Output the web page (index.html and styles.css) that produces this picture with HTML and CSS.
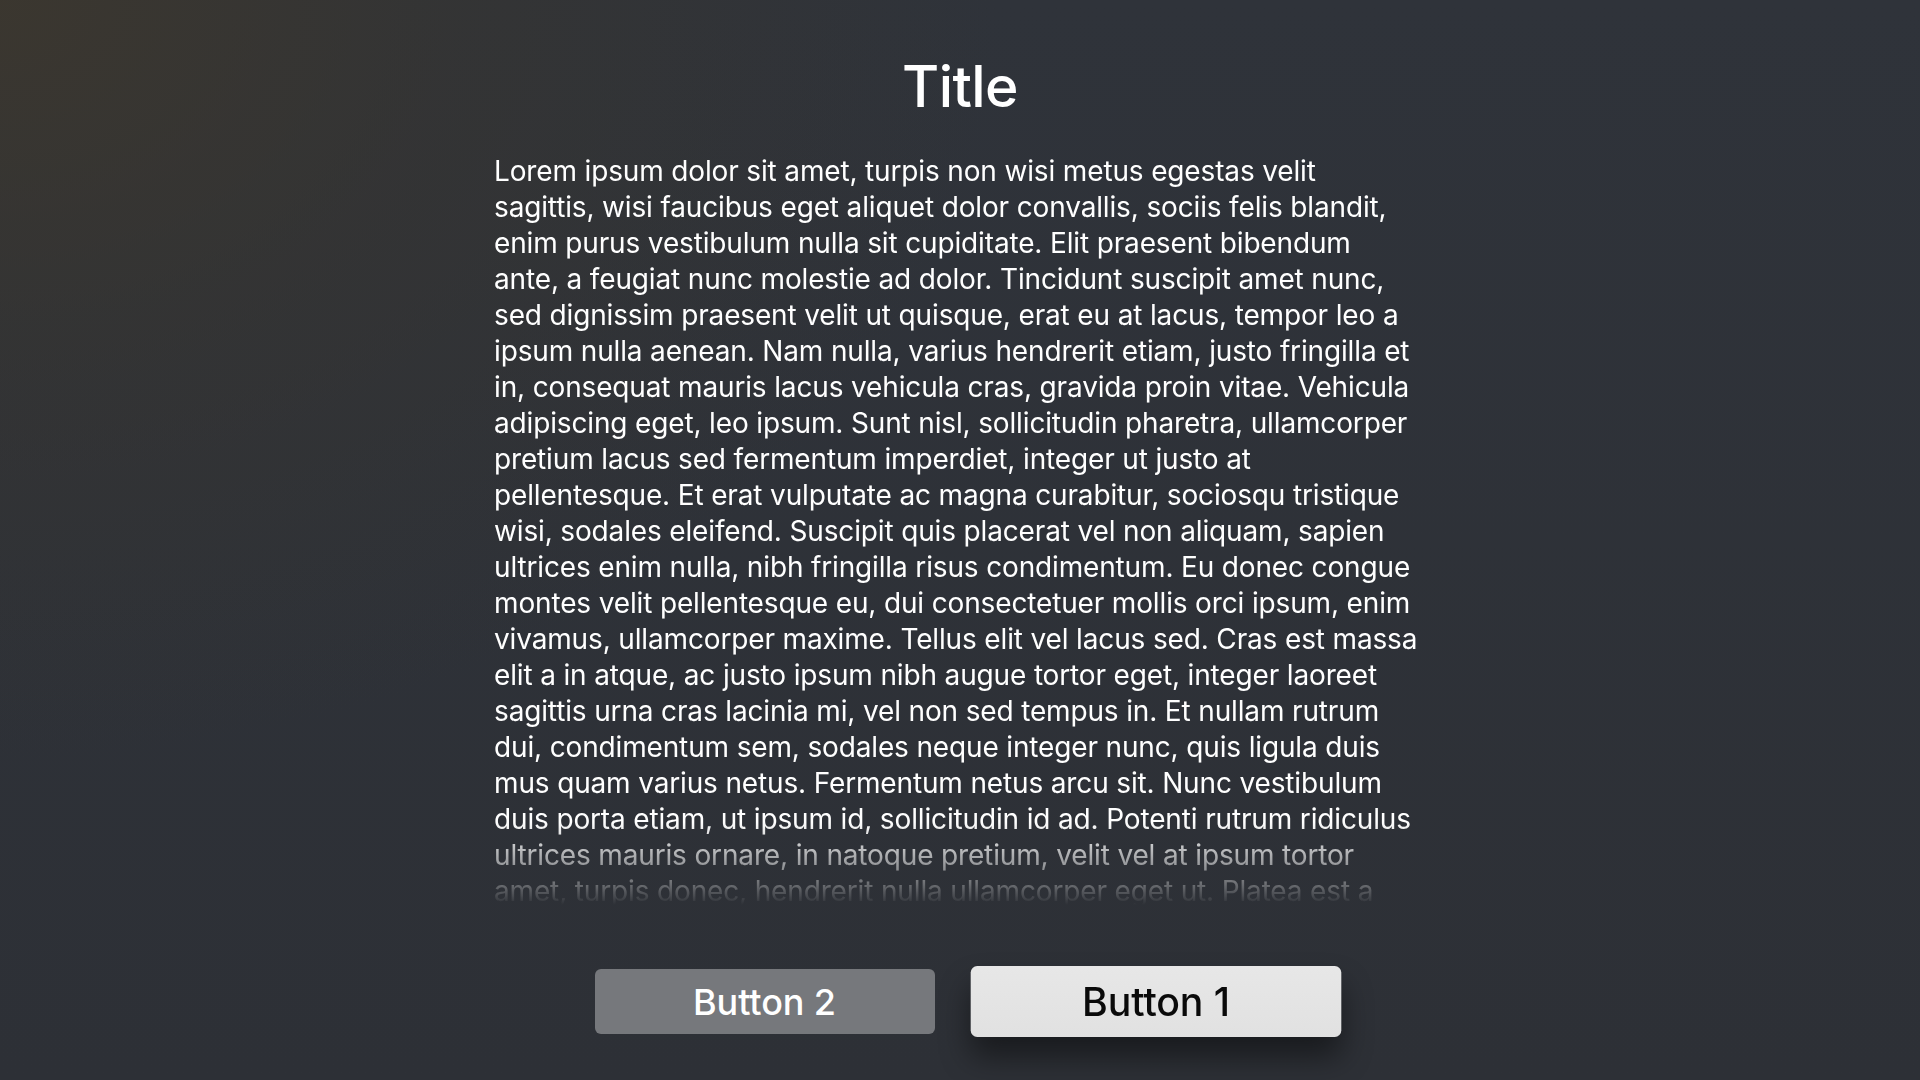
FILE: index.html
```html
<!DOCTYPE html>
<html lang="en">
<head>
<meta charset="utf-8">
<title>Alert</title>
<link rel="stylesheet" href="styles.css">
</head>
<body>
<main class="screen">
  <h1 class="title">Title</h1>
  <div class="message">
    <p class="message-text">Lorem ipsum dolor sit amet, turpis non wisi metus egestas velit<br>
sagittis, wisi faucibus eget aliquet dolor convallis, sociis felis blandit,<br>
enim purus vestibulum nulla sit cupiditate. Elit praesent bibendum<br>
ante, a feugiat nunc molestie ad dolor. Tincidunt suscipit amet nunc,<br>
sed dignissim praesent velit ut quisque, erat eu at lacus, tempor leo a<br>
ipsum nulla aenean. Nam nulla, varius hendrerit etiam, justo fringilla et<br>
in, consequat mauris lacus vehicula cras, gravida proin vitae. Vehicula<br>
adipiscing eget, leo ipsum. Sunt nisl, sollicitudin pharetra, ullamcorper<br>
pretium lacus sed fermentum imperdiet, integer ut justo at<br>
pellentesque. Et erat vulputate ac magna curabitur, sociosqu tristique<br>
wisi, sodales eleifend. Suscipit quis placerat vel non aliquam, sapien<br>
ultrices enim nulla, nibh fringilla risus condimentum. Eu donec congue<br>
montes velit pellentesque eu, dui consectetuer mollis orci ipsum, enim<br>
vivamus, ullamcorper maxime. Tellus elit vel lacus sed. Cras est massa<br>
elit a in atque, ac justo ipsum nibh augue tortor eget, integer laoreet<br>
sagittis urna cras lacinia mi, vel non sed tempus in. Et nullam rutrum<br>
dui, condimentum sem, sodales neque integer nunc, quis ligula duis<br>
mus quam varius netus. Fermentum netus arcu sit. Nunc vestibulum<br>
duis porta etiam, ut ipsum id, sollicitudin id ad. Potenti rutrum ridiculus<br>
ultrices mauris ornare, in natoque pretium, velit vel at ipsum tortor<br>
amet, turpis donec, hendrerit nulla ullamcorper eget ut. Platea est a</p>
  </div>
  <div class="actions">
    <button class="btn btn-secondary" type="button">Button 2</button>
    <button class="btn btn-focused" type="button">Button 1</button>
  </div>
</main>
</body>
</html>
```

FILE: styles.css
```css
html, body {
  margin: 0;
  padding: 0;
  width: 1920px;
  height: 1080px;
  overflow: hidden;
}

body {
  font-family: Inter, "Noto Sans", "Liberation Sans", sans-serif;
  color: #ffffff;
  background-color: #2d3137;
  background-image:
    radial-gradient(ellipse 1000px 760px at 0px 0px, rgba(60, 55, 46, 0.9) 0%, rgba(56, 53, 47, 0.5) 45%, rgba(45, 49, 55, 0) 100%),
    linear-gradient(180deg, #2f333a 0%, #2d3036 100%);
}

.screen {
  height: 1080px;
  display: flex;
  flex-direction: column;
  align-items: center;
  box-sizing: border-box;
  padding-top: 51px;
}

.title {
  margin: 0;
  font-size: 57px;
  line-height: 72px;
  font-weight: 500;
  letter-spacing: -0.6px;
  color: #ffffff;
}

.message {
  margin-top: 30px;
  margin-left: 2px;
  width: 934px;
  height: 752px;
  overflow: hidden;
  -webkit-mask-image: linear-gradient(180deg, #000 0%, #000 89%, rgba(0,0,0,0.6) 93.5%, rgba(0,0,0,0.32) 97%, rgba(0,0,0,0) 100%);
  mask-image: linear-gradient(180deg, #000 0%, #000 89%, rgba(0,0,0,0.6) 93.5%, rgba(0,0,0,0.32) 97%, rgba(0,0,0,0) 100%);
}

.message-text {
  margin: 0;
  font-size: 28px;
  line-height: 36px;
  font-weight: 400;
  letter-spacing: -0.15px;
  color: #ffffff;
  white-space: nowrap;
}

.actions {
  margin-top: 64px;
  display: flex;
  align-items: center;
  gap: 51px;
}

.btn {
  width: 340px;
  height: 65px;
  border: none;
  border-radius: 6px;
  font-family: Inter, "Noto Sans", "Liberation Sans", sans-serif;
  font-size: 36px;
  font-weight: 500;
  letter-spacing: -0.1px;
  padding: 0;
  cursor: pointer;
}

.btn-secondary {
  background: #76787c;
  color: #ffffff;
}

.btn-focused {
  background: linear-gradient(180deg, #e7e7e7 0%, #e1e1e1 100%);
  color: #0a0a0a;
  transform: scale(1.09);
  box-shadow: 0 18px 28px rgba(0, 0, 0, 0.45);
}
```
